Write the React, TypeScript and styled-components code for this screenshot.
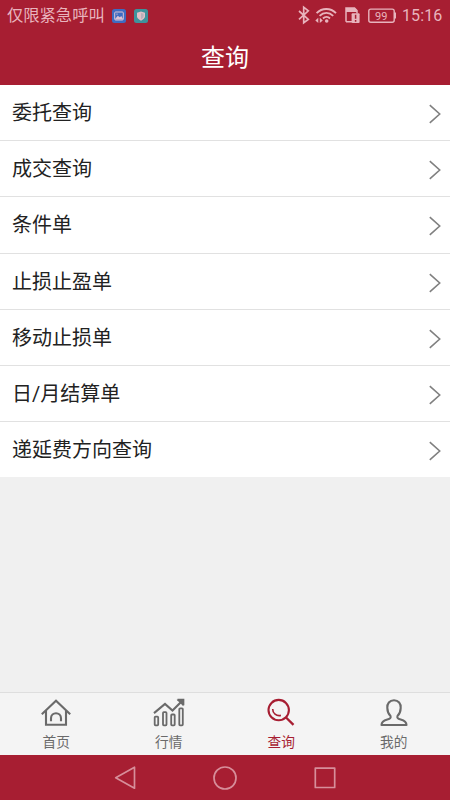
import React from "react";
import styled, { createGlobalStyle } from "styled-components";

const RED = "#a71e32";
const PINK = "#e8b4bd";

const GlobalStyle = createGlobalStyle`
  * { box-sizing: border-box; }
  body { margin: 0; }
`;

const Screen = styled.div`
  width: 450px;
  height: 800px;
  display: flex;
  flex-direction: column;
  overflow: hidden;
  background: #f0f0f0;
  font-family: Roboto, "Noto Sans CJK SC", sans-serif;
  font-weight: 400;
  color: #222;
`;

const StatusBar = styled.div`
  height: 31px;
  flex: none;
  display: flex;
  align-items: center;
  padding: 0 7px 0 7px;
  background: ${RED};
  color: ${PINK};
`;

const Carrier = styled.span`
  font-size: 16.3px;
  line-height: 30px;
  margin-right: 7px;
  padding-top: 1px;
  white-space: nowrap;
`;

const AppIcon = styled.svg`
  width: 14px;
  height: 14px;
  margin-right: 8px;
  flex: none;
`;

const StatusIcons = styled.svg`
  width: 104px;
  height: 31px;
  margin-left: auto;
  flex: none;
`;

const Clock = styled.span`
  width: 41px;
  margin-left: 4px;
  font-size: 16px;
  line-height: 31px;
  letter-spacing: 0.1px;
`;

const Header = styled.header`
  height: 54px;
  flex: none;
  background: ${RED};
  color: #fff;
  text-align: center;
  font-size: 24px;
  line-height: 54px;
`;

const List = styled.ul`
  margin: 0;
  padding: 0;
  list-style: none;
  flex: none;
  height: 392px;
  background: #fff;
`;

const Item = styled.li`
  height: 56.2px;
  padding: 0 8px 0 12px;
  display: flex;
  justify-content: space-between;
  align-items: center;
  border-bottom: 1px solid #e1e1e1;
  font-size: 20px;

  &:last-child { height: 54.8px; border-bottom: 0; }
`;

const Label = styled.span`
  line-height: 52px;
  padding-top: 1px;
`;

const Arrow = styled.svg`
  width: 14px;
  height: 20px;
  margin-top: 3px;
`;

const Tabs = styled.nav`
  height: 63px;
  flex: none;
  margin-top: auto;
  display: grid;
  grid-template-columns: repeat(4, 1fr);
  background: #f4f4f4;
  border-top: 1px solid #dedede;
`;

const Tab = styled.div<{ $active?: boolean }>`
  display: flex;
  flex-direction: column;
  align-items: center;
  padding-top: 3px;
  color: ${(p) => (p.$active ? RED : "#6a6a6a")};
  font-size: 13.7px;
  line-height: 20px;
`;

const TabIcon = styled.svg`
  width: 34px;
  height: 34px;
  margin-bottom: 2px;
  fill: none;
  stroke: currentColor;
  stroke-width: 2.1;
  flex: none;
`;

const SystemBar = styled.div`
  height: 45px;
  flex: none;
  display: flex;
  justify-content: center;
  align-items: center;
  gap: 76px;
  background: ${RED};
`;

const SystemIcon = styled.svg`
  width: 24px;
  height: 24px;
  fill: none;
  stroke: #d78e9a;
  stroke-width: 1.7;
  stroke-linejoin: round;
`;

const entries = ["委托查询", "成交查询", "条件单", "止损止盈单", "移动止损单", "日/月结算单", "递延费方向查询"];

const tabs = [
  {
    label: "首页",
    art: (
      <>
        <path d="M2.8 18.2 17 4.7l14.2 13.5M7 14.5v14.2h20V14.5" />
        <path d="M12 25.3v-3.1c0-6.6 10-6.6 10 0v3.1" />
      </>
    ),
  },
  {
    label: "行情",
    art: (
      <>
        <path d="M2 17.1 13 8l7.5 6.5L30.8 4.2M25.5 3.7h5.8v5.6" />
        <path d="m27 4.5 3.8-.3-.3 3.8z" fill="currentColor" />
        <g strokeWidth="1.8">
          <rect x="2.7" y="20.7" width="3.5" height="8.6" rx=".8" />
          <rect x="11" y="16.2" width="3.5" height="13.1" rx=".8" />
          <rect x="19.2" y="18.5" width="3.5" height="10.8" rx=".8" />
          <rect x="27.3" y="12.3" width="3.5" height="17" rx=".8" />
        </g>
      </>
    ),
  },
  {
    label: "查询",
    active: true,
    art: (
      <>
        <circle cx="14.7" cy="14.1" r="10.2" />
        <path d="m21.8 21.2 7.7 7.7" strokeWidth="2.3" />
        <path d="M8.7 13c-.1 4.2 3.6 7.4 8.2 6.4" strokeWidth="1.6" />
      </>
    ),
  },
  {
    label: "我的",
    art: (
      <path
        strokeLinejoin="round"
        d="M17 4.3c-4.5 0-7 3.2-6.7 7.6.1 3.4 1.1 6 3.1 7.8.9 2.2-.2 3.1-3.1 3.9-3.8 1-5.7 2.2-5.8 5.4h25c-.1-3.2-2-4.4-5.8-5.4-2.9-.8-4-1.7-3.1-3.9 2-1.8 3-4.4 3.1-7.8.3-4.4-2.2-7.6-6.7-7.6Z"
      />
    ),
  },
];

export default function App() {
  return (
    <Screen>
      <GlobalStyle />
      <StatusBar>
        <Carrier>仅限紧急呼叫</Carrier>
        <AppIcon viewBox="0 0 14 14">
          <rect width="14" height="14" rx="2.5" fill="#3e6cc2" />
          <rect x="2.7" y="3" width="8.6" height="8" rx="1" fill="none" stroke="#dcc3d5" />
          <path d="m3 10 2.8-3.3 2 1.6L9.3 7l2 3.5H3z" fill="#dcc3d5" />
          <circle cx="5" cy="5.1" r=".7" fill="#dcc3d5" />
        </AppIcon>
        <AppIcon viewBox="0 0 14 14">
          <rect width="14" height="14" rx="2.5" fill="#3e939c" />
          <path d="m7 2.5 4 1.2v3.6c0 2-1.8 3.4-4 4.4-2.2-1-4-2.4-4-4.4V3.7z" fill="#e1bfc7" />
          <path d="M7 4v6.2c1.5-.8 2.6-1.7 2.6-3.1V4.8z" fill="#b8b0ba" />
        </AppIcon>
        <StatusIcons viewBox="294 0 104 31" fill="none" stroke={PINK} strokeWidth="1.7">
          <path d="m299 11 9.3 8.4-4.6 3.4V7.2l4.6 3.7-9.3 8.4" />
          <path d="M316.6 13.2c5.5-5.6 13.9-5.6 19.4 0M319.6 15.9c4-4 9.6-4 13.6 0M323 18.5c2-2 5-2 7 0" strokeWidth="1.9" />
          <circle cx="326.7" cy="21" r="1.8" fill={PINK} stroke="none" />
          <path d="m318.3 17.8-3 2.6 3 2.6zm1.5 0 3 2.6-3 2.6z" fill={PINK} stroke="none" />
          <path d="M346 21.7V8h8.5l2.5 2.6v3M346 21.7h6" strokeWidth="1.5" />
          <path d="M346 8h8.5l2.5 2.6V12h-11z" fill={PINK} stroke="none" />
          <rect x="351.6" y="13.2" width="8" height="9.8" rx="1" fill={PINK} stroke="none" />
          <path d="M355.6 14.8v4m0 1.3v1.6" stroke={RED} strokeWidth="1.5" />
          <rect x="368.8" y="9.1" width="25.4" height="13.2" rx="2" strokeWidth="1.4" />
          <path d="M395 12.5v6" strokeWidth="2" />
          <text x="381.2" y="19.7" textAnchor="middle" fontFamily="Roboto, sans-serif" fontSize="11" fill={PINK} stroke="none">99</text>
        </StatusIcons>
        <Clock>15:16</Clock>
      </StatusBar>
      <Header>查询</Header>
      <List>
        {entries.map((label) => (
          <Item key={label}>
            <Label>{label}</Label>
            <Arrow viewBox="0 0 14 20" fill="none" stroke="#808080" strokeWidth="1.6">
              <path d="m1.8 1.2 9.9 8.8-9.9 8.8" />
            </Arrow>
          </Item>
        ))}
      </List>
      <Tabs>
        {tabs.map((tab) => (
          <Tab key={tab.label} $active={tab.active}>
            <TabIcon viewBox="0 0 34 34">{tab.art}</TabIcon>
            {tab.label}
          </Tab>
        ))}
      </Tabs>
      <SystemBar>
        <SystemIcon viewBox="0 0 24 24"><path d="M21.5 1.2v21L2.7 11.7z" /></SystemIcon>
        <SystemIcon viewBox="0 0 24 24"><circle cx="12" cy="12" r="11" /></SystemIcon>
        <SystemIcon viewBox="0 0 24 24"><rect x="2.3" y="2.1" width="19.4" height="19.4" /></SystemIcon>
      </SystemBar>
    </Screen>
  );
}
